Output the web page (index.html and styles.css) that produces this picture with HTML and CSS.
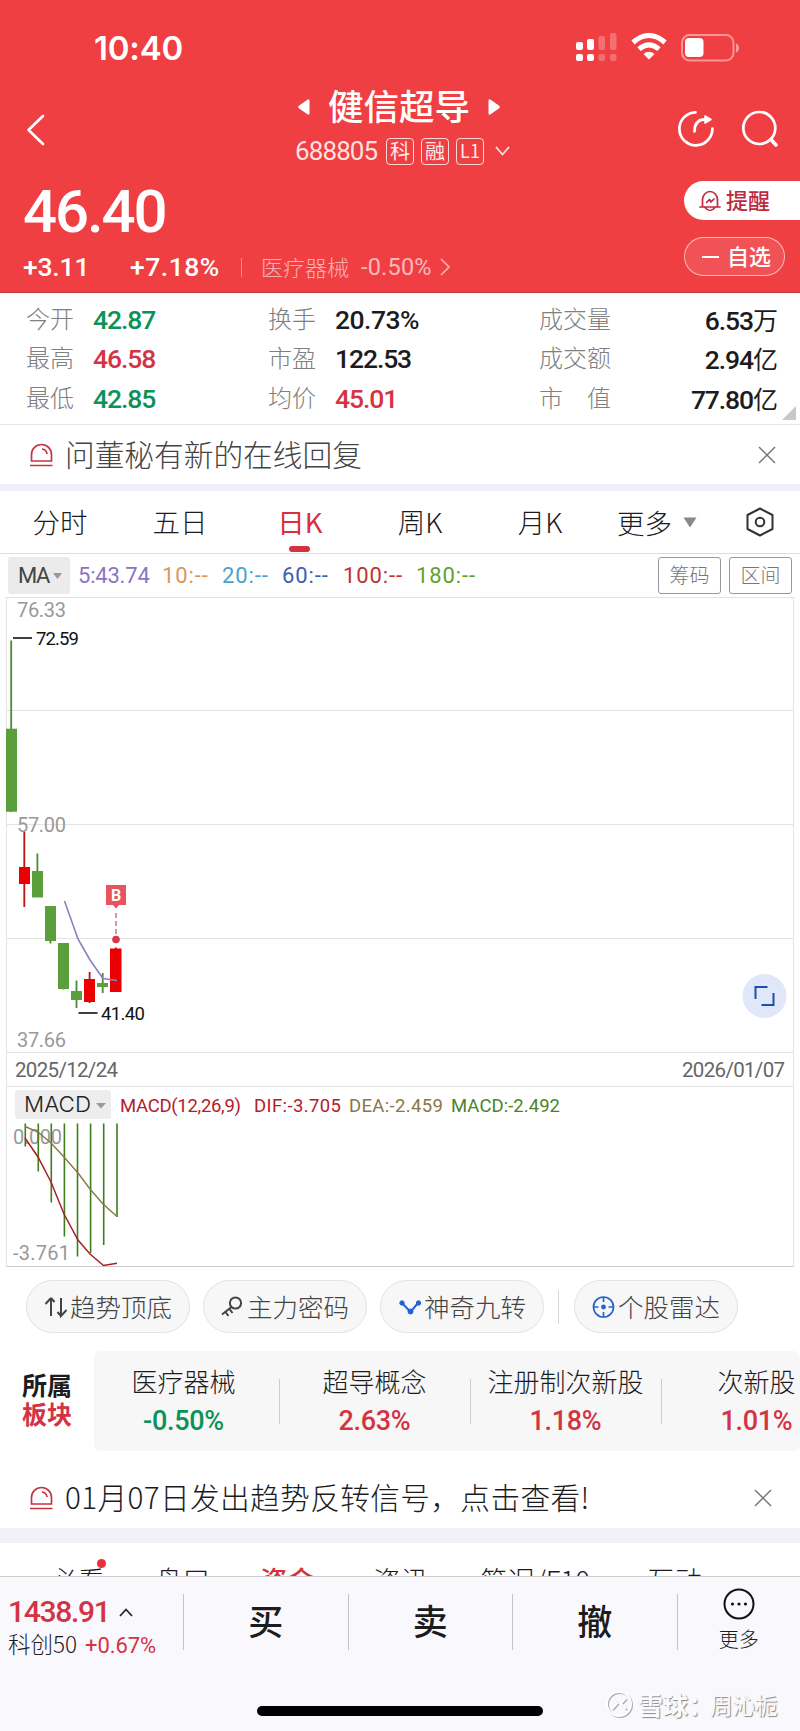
FILE: index.html
```html
<!DOCTYPE html>
<html lang="zh-CN">
<head>
  <meta charset="UTF-8" />
  <meta name="viewport" content="width=device-width, initial-scale=1.0"/>
  <title>健信超导 688805</title>
  <link rel="stylesheet" href="styles.css">
</head>
<body>
<div class="page">

  <header class="header">
    <div class="status-bar">
      <span class="clock">10:40</span>
      <svg class="signal" width="42" height="30" viewBox="0 0 42 30" fill="#fff">
        <rect x="1" y="9" width="7" height="8" rx="2"/><rect x="1" y="21" width="7" height="7" rx="2"/>
        <rect x="12" y="6" width="7" height="11" rx="2"/><rect x="12" y="21" width="7" height="7" rx="2"/>
        <g opacity=".25"><rect x="23.500" y="3" width="6.500" height="14" rx="2"/><rect x="23.500" y="21" width="6.500" height="7" rx="2"/>
        <rect x="35" y="0" width="6.500" height="17" rx="2"/><rect x="35" y="21" width="6.500" height="7" rx="2"/></g>
      </svg>
      <svg class="wifi" width="36" height="27" viewBox="0 0 36 27" fill="none" stroke="#fff" stroke-width="5">
        <path d="M2 9.500Q18-4.500 34 9.500"/><path d="M8 16.200Q18 7.500 28 16.200"/><path d="M12.500 21Q18 16.500 23.500 21L18 26.500Z" fill="#fff" stroke="none"/>
      </svg>
      <svg class="battery" width="59" height="28" viewBox="0 0 59 28">
        <rect x="1" y="1" width="51.500" height="25.500" rx="7.500" fill="none" stroke="#fff" stroke-opacity=".45" stroke-width="2"/>
        <rect x="4" y="4" width="18.500" height="19" rx="4" fill="#fff"/>
        <path d="M55 9.500q3 1 3 4.500t-3 4.500z" fill="#fff" opacity=".5"/>
      </svg>
    </div>

    <div class="nav">
      <svg class="back" width="20" height="32" viewBox="0 0 20 32" fill="none" stroke="#fff" stroke-width="2.600" stroke-linecap="round" stroke-linejoin="round"><path d="M17 2L2.500 16 17 30"/></svg>
      <div class="nav-title">
        <div class="name-row">
          <svg width="12" height="18" viewBox="0 0 12 18" fill="#fff"><path d="M11.500 3v12q0 3-2.500 1L.8 10.200q-1.200-1.200 0-2.400L9 2q2.500-2 2.500 1z"/></svg>
          <h1>健信超导</h1>
          <svg width="12" height="18" viewBox="0 0 12 18" fill="#fff"><path d="M.5 3v12q0 3 2.500 1l8.200-5.800q1.200-1.200 0-2.400L3 2Q.5 0 .5 3z"/></svg>
        </div>
        <div class="code-row">
          <span class="code">688805</span>
          <span class="badge">科</span><span class="badge">融</span><span class="badge l1">L1</span>
          <svg width="15" height="10" viewBox="0 0 15 10" fill="none" stroke="#fff" stroke-opacity=".85" stroke-width="1.800"><path d="M1 1l6.500 7.500L14 1"/></svg>
        </div>
      </div>
      <svg class="share" width="38" height="38" viewBox="0 0 38 38" fill="none" stroke="#fff" stroke-width="2.700" stroke-linecap="round" stroke-linejoin="round">
        <path d="M18.500 2.300A16.500 16.500 0 1 0 35.400 18.500"/><path d="M17.500 21.500C17.500 13.500 21 9.300 28 9.300"/><path d="M28 6l6 3.500-6 3.500z" fill="#fff" stroke-width="1.500"/>
      </svg>
      <svg class="search" width="38" height="38" viewBox="0 0 38 38" fill="none" stroke="#fff" stroke-width="2.700" stroke-linecap="round"><circle cx="18.300" cy="18" r="16"/><path d="M30 29.500l5 5.500" stroke-width="3.600"/></svg>
    </div>

    <div class="quote">
      <div class="quote-left">
        <div class="price">46.40</div>
        <div class="change-row">
          <span class="chg">+3.11</span>
          <span class="pct">+7.18%</span>
          <span class="sep"></span>
          <span class="industry">医疗器械</span>
          <span class="industry-pct">-0.50%</span>
          <svg width="11" height="18" viewBox="0 0 11 18" fill="none" stroke="#fff" stroke-opacity=".6" stroke-width="1.700"><path d="M1 1l8 8-8 8"/></svg>
        </div>
      </div>
      <div class="quote-btns">
        <div class="btn-alert">
          <svg width="22" height="22" viewBox="0 0 22 22" fill="none" stroke="#bd2a40" stroke-width="1.700" stroke-linejoin="round" stroke-linecap="round"><path d="M3.500 17V10a7.500 8.500 0 0 1 15 0v7M1 17h20M6 17.500q5 6 10 0"/><path d="M7.500 12.500l3-3 1.500 2.500 3-3"/></svg>
          <span>提醒</span>
        </div>
        <div class="btn-fav"><i class="minus"></i><span>自选</span></div>
      </div>
    </div>
  </header>

  <section class="stats">
    <div class="stat-col c1">
      <div><label>今开</label><b class="green">42.87</b></div>
      <div><label>最高</label><b class="red">46.58</b></div>
      <div><label>最低</label><b class="green">42.85</b></div>
    </div>
    <div class="stat-col c2">
      <div><label>换手</label><b>20.73%</b></div>
      <div><label>市盈</label><b>122.53</b></div>
      <div><label>均价</label><b class="red">45.01</b></div>
    </div>
    <div class="stat-col c3">
      <div><label>成交量</label><b>6.53<span>万</span></b></div>
      <div><label>成交额</label><b>2.94<span>亿</span></b></div>
      <div><label>市　值</label><b>77.80<span>亿</span></b></div>
    </div>
    <i class="corner"></i>
  </section>

  <div class="notice">
    <svg class="siren" width="23" height="24" viewBox="0 0 23 24" fill="none" stroke="#c8323f" stroke-width="1.700"><path d="M1.500 18V11.500a10 10 0 0 1 20 0V18zM0 22.500h22.500"/><path d="M12 6q4.500.5 5 5"/></svg>
    <span class="notice-text">问董秘有新的在线回复</span>
    <svg class="close" width="18" height="18" viewBox="0 0 18 18" stroke="#777" stroke-width="1.500"><path d="M1 1l16 16M17 1L1 17"/></svg>
  </div>

  <nav class="tabs">
    <span>分时</span><span>五日</span><span class="active">日K</span><span>周K</span><span>月K</span>
    <span class="more">更多<svg width="14" height="11" viewBox="0 0 14 11" fill="#888"><path d="M.5.5h13L7 10.500z"/></svg></span>
    <svg class="gear" width="28" height="30" viewBox="0 0 28 30" fill="none" stroke="#333" stroke-width="2"><path d="M14 1.500l12.500 6.500v14L14 28.500 1.500 22V8z" stroke-linejoin="round"/><circle cx="14" cy="15" r="4.300"/></svg>
  </nav>

  <div class="ma-row">
    <span class="ma-pill">MA<svg width="9" height="6" viewBox="0 0 9 6" fill="#999"><path d="M0 0h9L4.500 6z"/></svg></span>
    <span class="m5">5:43.74</span><span class="m10">10:--</span><span class="m20">20:--</span>
    <span class="m60">60:--</span><span class="m100">100:--</span><span class="m180">180:--</span>
    <span class="box-btn">筹码</span><span class="box-btn">区间</span>
  </div>

  <div class="chart">
    <svg width="800" height="673" viewBox="0 597 800 673">
      <g stroke="#e3e3e3" stroke-width="1" fill="none" shape-rendering="crispEdges">
        <path d="M6 597.500H794M6 710.500H794M6 824.500H794M6 938.500H794M6 1052.500H794M6 1086.500H794"/>
        <path d="M6.500 597V1266M793.500 597V1266"/>
        <path d="M6 1266.500H794" stroke="#ccc"/>
      </g>
      <g class="axis" font-size="20">
        <text x="17" y="617" textLength="49">76.33</text>
        <text x="17" y="832" textLength="49">57.00</text>
        <text x="17" y="1047" textLength="49">37.66</text>
        <text x="13" y="1144" textLength="49">0.000</text>
        <text x="13" y="1260" textLength="57">-3.761</text>
      </g>
      <!-- candles -->
      <g fill="#5a9f3c" stroke="#4b8a30">
        <path d="M11.200 640.500V812M37.400 853.500V890M50.400 910V943.500M63.500 950V989.500M76.500 980.500V1008M102.700 973V993" stroke-width="1.800"/>
        <g stroke="none">
          <rect x="6" y="728.700" width="11" height="83"/><rect x="32" y="871" width="11" height="26.500"/>
          <rect x="45" y="906" width="11" height="35"/><rect x="58" y="943" width="11" height="46"/>
          <rect x="71" y="991" width="11" height="9"/><rect x="97" y="983" width="11" height="4"/>
        </g>
      </g>
      <g fill="#ea0000">
        <path d="M24.300 832V907M89.600 972V1003M115.800 947.500V990" stroke="#b81212" stroke-width="1.800"/>
        <rect x="19" y="867" width="11" height="17"/><rect x="84" y="979" width="11" height="23"/><rect x="110" y="948.500" width="11.500" height="43.500"/>
      </g>
      <path d="M64.500 901L78 939 90 960 103 978.500 117 980.500" fill="none" stroke="#8b7fc4" stroke-width="1.600"/>
      <!-- buy marker -->
      <path d="M106 885h20v20h-7l-3 3.500-3-3.500h-7z" fill="#e85361"/>
      <text class="buy" x="116" y="901" text-anchor="middle" font-size="16">B</text>
      <path d="M116 913v22" stroke="#b0566a" stroke-width="1.200" stroke-dasharray="5 3"/>
      <circle cx="116" cy="939.500" r="3.800" fill="#dc3545"/>
      <path d="M13 638h19M78.500 1013h19" stroke="#000" stroke-width="1.600"/>
      <g class="extreme" font-size="18.500">
        <text x="36" y="645" textLength="43">72.59</text>
        <text x="101" y="1020" textLength="44">41.40</text>
      </g>
      <g class="dates" font-size="20.500">
        <text x="15" y="1077" textLength="103">2025/12/24</text>
        <text x="682" y="1077" textLength="103">2026/01/07</text>
      </g>
      <!-- macd -->
      <rect x="15" y="1090" width="96" height="29" rx="3" fill="#ededed"/>
      <text class="macd-name" x="24" y="1112" font-size="22" textLength="67" lengthAdjust="spacingAndGlyphs">MACD</text>
      <path d="M96 1103h10l-5 5.500z" fill="#999"/>
      <g class="macd" font-size="18.500">
        <text x="120" y="1112" textLength="121" fill="#b3202c">MACD(12,26,9)</text>
        <text x="254" y="1112" textLength="87" fill="#b3202c">DIF:-3.705</text>
        <text x="349" y="1112" textLength="94" fill="#8a7646">DEA:-2.459</text>
        <text x="451" y="1112" textLength="109" fill="#4a8426">MACD:-2.492</text>
      </g>
      <path d="M25.300 1123.500V1146.500M38.300 1123.500V1171.500M51.300 1123.500V1202.500M64.400 1123.500V1236.500M77.500 1123.500V1256.500M90.600 1123.500V1253M103.700 1123.500V1245M117 1123.500V1217" stroke="#3f7d1d" stroke-width="1.600"/>
      <path d="M25 1138L38 1157 51 1182 64 1214 78 1240 90 1254 103.500 1265.500 117 1263.300" fill="none" stroke="#a81f28" stroke-width="1.500"/>
      <path d="M25 1126.500L38 1132 51 1143 64 1157 78 1173 90 1189 103 1204 117 1216.500" fill="none" stroke="#8a7646" stroke-width="1.400"/>
      <!-- fullscreen button -->
      <circle cx="764.500" cy="996" r="22" fill="#dfe7f8"/>
      <path d="M755.500 999v-12h12M773.500 993v12h-12" fill="none" stroke="#1d4fae" stroke-width="2"/>
    </svg>
  </div>

  <div class="tools">
    <div class="tool"><svg width="24" height="22" viewBox="0 0 24 22" fill="none" stroke="#444" stroke-width="2"><path d="M7 20V2M1.500 8L7 2M17 2v18L22.500 14"/><path d="M7 2l3.500 4M17 20l-3.500-4"/></svg><span>趋势顶底</span></div>
    <div class="tool"><svg width="24" height="22" viewBox="0 0 24 22" fill="none" stroke="#444" stroke-width="2"><circle cx="14.500" cy="7" r="5.600"/><path d="M10.500 11L1 18.500M4.500 16l3 4M8.500 13l3 4"/></svg><span>主力密码</span></div>
    <div class="tool"><svg width="24" height="22" viewBox="0 0 24 22" fill="#2463d1" stroke="#2463d1"><path d="M4 7l8.500 9L20 7" fill="none" stroke-width="2"/><circle cx="4" cy="7" r="2.200"/><circle cx="12.500" cy="15.500" r="2.500"/><circle cx="20.500" cy="7" r="2.200"/></svg><span>神奇九转</span></div>
    <i class="tool-sep"></i>
    <div class="tool"><svg width="24" height="22" viewBox="0 0 24 22" fill="none" stroke="#2463d1" stroke-width="1.700"><circle cx="11.500" cy="11" r="10"/><path d="M11.500 1v5M11.500 16v5M1.500 11h5M16.500 11h5"/><circle cx="11.500" cy="11" r="1.600" fill="#2463d1"/></svg><span>个股雷达</span></div>
  </div>

  <div class="sectors">
    <div class="sector-title"><span>所属</span><span class="red">板块</span></div>
    <div class="sector-list">
      <div class="sector"><span>医疗器械</span><b class="green">-0.50%</b></div>
      <div class="sector"><span>超导概念</span><b class="red">2.63%</b></div>
      <div class="sector"><span>注册制次新股</span><b class="red">1.18%</b></div>
      <div class="sector"><span>次新股</span><b class="red">1.01%</b></div>
    </div>
  </div>

  <div class="notice signal-notice">
    <svg class="siren" width="23" height="24" viewBox="0 0 23 24" fill="none" stroke="#c8323f" stroke-width="1.700"><path d="M1.500 18V11.500a10 10 0 0 1 20 0V18zM0 22.500h22.500"/><path d="M12 6q4.500.5 5 5"/></svg>
    <span class="notice-text">01月07日发出趋势反转信号，点击查看!</span>
    <svg class="close" width="18" height="18" viewBox="0 0 18 18" stroke="#777" stroke-width="1.500"><path d="M1 1l16 16M17 1L1 17"/></svg>
  </div>

  <div class="subtabs">
    <span class="dot">必看</span><span>盘口</span><span class="active">资金</span><span>资讯</span><span>简况/F10</span><span>互动</span>
  </div>

  <footer class="bottom">
    <div class="trade">
      <div class="index">
        <div class="index-value">1438.91<svg width="14" height="9" viewBox="0 0 14 9" fill="none" stroke="#222" stroke-width="1.700"><path d="M1 8l6-6.500L13 8"/></svg></div>
        <div class="index-name">科创50<span>+0.67%</span></div>
      </div>
      <div class="act">买</div>
      <div class="act">卖</div>
      <div class="act">撤</div>
      <div class="act-more">
        <svg width="32" height="32" viewBox="0 0 32 32" fill="#111"><circle cx="16" cy="16" r="14.500" fill="none" stroke="#111" stroke-width="2"/><circle cx="9.500" cy="16" r="1.600"/><circle cx="16" cy="16" r="1.600"/><circle cx="22.500" cy="16" r="1.600"/></svg>
        <span>更多</span>
      </div>
    </div>
    <div class="home-row">
      <i class="home-bar"></i>
      <div class="watermark">
        <svg width="29" height="29" viewBox="0 0 29 29" fill="none"><g stroke="#aaa" stroke-width="2"><circle cx="15" cy="15" r="12"/><path d="M8 9l5 5.500L8 20M22 9l-5 5.500 5 5.500"/></g><g stroke="#fff" stroke-width="2"><circle cx="14" cy="14" r="12"/><path d="M7 8l5 5.500L7 19M21 8l-5 5.500 5 5.500"/></g></svg>
        <strong>雪球：</strong><span>周沁栀</span>
      </div>
    </div>
  </footer>
</div>
</body>
</html>
```
FILE: styles.css
```css
* {
  box-sizing: border-box;
}

body {
  margin: 0;
  background: #fff;
  color: #1c1c1e;
  font-family: "Noto Sans CJK SC", sans-serif;
  font-weight: 300;
}

.page {
  width: 800px;
  height: 1731px;
  overflow: hidden;
  white-space: nowrap;
}

svg {
  display: block;
  flex-shrink: 0;
}

.red {
  color: #d33444;
}

.green {
  color: #0a9257;
}

/* Header */
.header {
  height: 293px;
  background: #f03f42;
  color: #fff;
  border-bottom: 1px solid #bf3a3a;
}

.status-bar {
  display: flex;
  height: 85px;
  padding: 32px 0 0 94px;
}

.clock {
  width: 481px;
  font: 600 33px/33px Inter, sans-serif;
  letter-spacing: -0.200px;
}

.signal {
  margin-top: 1px;
}

.wifi {
  margin: 1px 0 0 14px;
}

.battery {
  margin: 2px 0 0 14px;
}

.nav {
  display: flex;
  height: 84px;
}

.back {
  margin: 29px 0 0 26px;
}

.nav-title {
  width: 220px;
  margin-left: 249px;
}

.name-row {
  display: flex;
  align-items: center;
  height: 44px;
  padding-left: 3px;
}

.name-row h1 {
  margin: -4px 18px 0;
  font-size: 35.500px;
  line-height: 44px;
  font-weight: 500;
}

.code-row {
  display: flex;
  align-items: center;
  height: 44px;
}

.code {
  width: 91px;
  color: rgba(255, 255, 255, .85);
  font: 400 26px/30px Roboto, sans-serif;
  letter-spacing: -0.900px;
}

.badge {
  width: 28px;
  height: 27px;
  margin-right: 7px;
  border: 1px solid rgba(255, 255, 255, .8);
  border-radius: 4px;
  font-size: 20px;
  font-weight: 400;
  line-height: 23px;
  text-align: center;
  color: #ffe9e9;
}

.badge.l1 {
  margin-right: 11px;
  font-size: 18px;
}

.share {
  margin: 25px 0 0 162px;
}

.search {
  margin: 25px 0 0 26px;
}

.quote {
  display: flex;
  justify-content: space-between;
}

.quote-left {
  padding: 10px 0 0 23px;
}

.price {
  font: 500 60px/66px Roboto, sans-serif;
  letter-spacing: -2.100px;
}

.change-row {
  display: flex;
  align-items: center;
  height: 44px;
  font: 500 26.500px/44px Roboto, sans-serif;
}

.chg {
  width: 107px;
  letter-spacing: -0.200px;
}

.pct {
  width: 111px;
  letter-spacing: 0.500px;
}

.sep {
  width: 1px;
  height: 19px;
  margin-right: 19px;
  background: rgba(255, 255, 255, .4);
}

.industry {
  width: 100px;
  margin-top: -3px;
  color: rgba(255, 255, 255, .6);
  font: 300 22px/44px "Noto Sans CJK SC", sans-serif;
}

.industry-pct {
  width: 79px;
  color: rgba(255, 255, 255, .65);
  font-size: 23.500px;
  font-weight: 400;
  letter-spacing: 0.200px;
}

.quote-btns {
  width: 116px;
  padding-top: 12px;
  font-size: 22px;
  font-weight: 500;
  line-height: 38px;
}

.btn-alert,
.btn-fav {
  display: flex;
  align-items: center;
  height: 39px;
  padding-left: 15px;
  background: #fff;
  color: #bd2a40;
  border-radius: 20px 0 0 20px;
}

.quote-btns span {
  margin-top: -3px;
}

.btn-alert span {
  margin-left: 5px;
}

.btn-fav {
  width: 101px;
  margin-top: 17px;
  padding-left: 17px;
  border: 1px solid rgba(255, 255, 255, .6);
  border-radius: 20px;
  background: rgba(255, 255, 255, .1);
  color: #fff;
}

.minus {
  width: 17px;
  height: 2px;
  margin-right: 8px;
  background: #fff;
}

/* Key figures */
.stats {
  position: relative;
  display: flex;
  height: 132px;
  padding: 7px 22px 0 26px;
  border-bottom: 1px solid #e6e6e6;
}

.stat-col > div {
  display: flex;
  height: 39.300px;
  line-height: 39px;
}

.stat-col label {
  color: #808080;
  font-size: 24px;
  line-height: 35px;
}

.stat-col b {
  font: 500 26.500px/40px Roboto, sans-serif;
  letter-spacing: -1.100px;
}

.stat-col b span {
  font: 400 25px/38px "Noto Sans CJK SC", sans-serif;
  letter-spacing: 0;
}

.c1 {
  width: 242px;
}

.c1 label {
  width: 67px;
}

.c2 {
  width: 271px;
}

.c2 label {
  width: 67px;
}

.c2 > div:first-child b {
  letter-spacing: -0.500px;
}

.c3 {
  flex: 1;
}

.c3 > div {
  justify-content: space-between;
}

.corner {
  position: absolute;
  right: 4px;
  bottom: 4px;
  border-left: 14px solid transparent;
  border-bottom: 14px solid #c8c8c8;
}

/* Notices */
.notice {
  display: flex;
  align-items: center;
  height: 66px;
  padding: 0 24px 0 30px;
  border-bottom: 7px solid #f0f0fa;
}

.notice-text {
  flex: 1;
  margin: -2px 0 0 12px;
  color: #444;
  font-size: 29.700px;
  line-height: 44px;
}

.signal-notice {
  height: 92px;
  padding: 17px 28px 0 30px;
  border-bottom: 15px solid #f1f1f6;
}

.signal-notice .notice-text {
  color: #1c1c1e;
  letter-spacing: 0.350px;
}

/* Period tabs */
.tabs {
  display: flex;
  align-items: center;
  height: 63px;
  border-bottom: 1px solid #ddd;
  font-size: 27.500px;
  line-height: 60px;
}

.tabs > span {
  width: 120px;
  height: 62px;
  text-align: center;
}

.tabs .active {
  position: relative;
  color: #d7303f;
  font-weight: 400;
}

.tabs .active::after {
  content: "";
  position: absolute;
  left: 49px;
  bottom: 1px;
  width: 21px;
  height: 6px;
  border-radius: 3px;
  background: #d9303e;
}

.tabs .more {
  display: flex;
  align-items: center;
  width: 129px;
  margin-left: 17px;
}

.more svg {
  margin-left: 11px;
}

/* MA row */
.ma-row {
  display: flex;
  align-items: center;
  height: 43px;
  padding-left: 8px;
  font: 400 22px/38px Roboto, sans-serif;
  letter-spacing: 0.400px;
}

.ma-row span {
  flex-shrink: 0;
}

.ma-pill {
  display: flex;
  align-items: center;
  width: 62px;
  height: 37px;
  margin-right: 8px;
  padding-left: 10px;
  border-radius: 3px;
  background: #ebebeb;
  color: #444;
  letter-spacing: -1.500px;
}

.ma-pill svg {
  margin-left: 4px;
}

.m5 {
  width: 84px;
  color: #8c74c2;
  letter-spacing: -0.200px;
}

.m10 {
  width: 60px;
  color: #dd965a;
}

.m20 {
  width: 60px;
  color: #46a3cf;
}

.m60 {
  width: 61px;
  color: #3a62ad;
}

.m100 {
  width: 73px;
  color: #bb3530;
}

.m180 {
  width: 242px;
  color: #63a02c;
}

.m10,
.m20,
.m60,
.m100,
.m180 {
  letter-spacing: 0.900px;
}

.box-btn {
  width: 63px;
  height: 37px;
  margin-right: 8px;
  border: 1px solid #999;
  border-radius: 3px;
  color: #777;
  font: 300 20px/34px "Noto Sans CJK SC", sans-serif;
  letter-spacing: 0;
  text-align: center;
}

/* Chart */
.chart {
  height: 673px;
}

.chart text {
  font-family: Roboto, sans-serif;
  font-weight: 400;
}

.chart .axis {
  fill: #999;
}

.extreme {
  fill: #111;
}

.dates {
  fill: #666;
}

.chart .buy {
  fill: #fff;
  font-weight: 700;
}

.chart .macd-name {
  fill: #222;
  font-family: Inter, sans-serif;
  font-weight: 300;
}

/* Tools */
.tools {
  display: flex;
  align-items: center;
  height: 81px;
  padding: 0 0 8px 26px;
}

.tool {
  display: flex;
  align-items: center;
  justify-content: center;
  width: 164px;
  height: 53px;
  margin-right: 13px;
  border: 1px solid #e2e2e2;
  border-radius: 27px;
  background: #f7f7f7;
  color: #444;
  font-size: 25.500px;
  line-height: 50px;
}

.tool svg {
  margin-right: 2px;
}

.tool span {
  margin-top: -2px;
}

.tool-sep {
  width: 1px;
  height: 34px;
  margin: 0 15px 0 1px;
  background: #d8d8d8;
}

/* Sectors */
.sectors {
  display: flex;
  height: 100px;
}

.sector-title {
  width: 94px;
  padding: 19px 0 0 22px;
  font-size: 25px;
  font-weight: 700;
  line-height: 29px;
}

.sector-title span {
  display: block;
}

.sector-list {
  display: flex;
  align-items: center;
  width: 706px;
  border-radius: 6px;
  background: #f7f7f7;
  overflow: hidden;
}

.sector {
  flex-shrink: 0;
  width: 191px;
  font-size: 26px;
  text-align: center;
}

.sector:first-child {
  width: 185px;
}

.sector:first-child span,
.sector:first-child b {
  margin-left: -6px;
}

.sector + .sector {
  background: linear-gradient(#ccc, #ccc) 0 50% / 1px 45px no-repeat;
}

.sector span,
.sector b {
  display: block;
  line-height: 34px;
}

.sector b {
  margin-top: 6px;
  font: 500 27px/34px Roboto, sans-serif;
  letter-spacing: -0.300px;
}

/* Clipped content tabs */
.subtabs {
  display: flex;
  height: 33px;
  padding: 16px 0 0 50px;
  overflow: hidden;
  font-size: 27.500px;
  line-height: 40px;
}

.subtabs span {
  flex-shrink: 0;
  width: 105px;
}

.subtabs .active {
  width: 113px;
  color: #d7303f;
  font-weight: 500;
}

.subtabs span:nth-child(4) {
  width: 107px;
}

.subtabs span:nth-child(5) {
  width: 167px;
}

.subtabs .dot {
  position: relative;
}

.dot::after {
  content: "";
  position: absolute;
  left: 47px;
  top: 0;
  width: 9px;
  height: 9px;
  border-radius: 50%;
  background: #ea2f3c;
}

/* Bottom bar */
.bottom {
  height: 155px;
  border-top: 1px solid #ccc;
  background: #f8f8fd;
}

.trade {
  display: flex;
  height: 92px;
  padding-top: 17px;
}

.index {
  width: 183px;
  padding-left: 8px;
}

.index-value {
  display: flex;
  align-items: center;
  height: 36px;
  color: #d33444;
  font: 500 30px/36px Roboto, sans-serif;
  letter-spacing: -1.300px;
}

.index-value svg {
  margin-left: 9px;
}

.index-name {
  margin-top: -2px;
  font-size: 22.500px;
  line-height: 30px;
}

.index-name span {
  margin-left: 8px;
  color: #d33444;
  font: 400 22px/30px Roboto, sans-serif;
  letter-spacing: -0.100px;
}

.act,
.act-more {
  width: 164.500px;
  height: 56px;
  border-left: 1px solid #c4c4c8;
  font-size: 35px;
  font-weight: 500;
  line-height: 51px;
  text-align: center;
}

.act-more {
  flex: 1;
  display: flex;
  flex-direction: column;
  align-items: center;
  font-size: 20px;
  font-weight: 300;
  line-height: 30px;
}

.act-more svg {
  margin-top: -6px;
}

.act-more span {
  margin-top: 4px;
}

.home-row {
  display: flex;
  padding-left: 257px;
}

.home-bar {
  width: 286px;
  height: 10px;
  margin-top: 37px;
  border-radius: 5px;
  background: #000;
}

.watermark {
  display: flex;
  align-items: center;
  height: 30px;
  margin: 20px 0 0 62px;
  color: #fbfbfd;
  font-size: 22.500px;
  font-weight: 400;
  text-shadow: 1px 1px 1px #888;
}

.watermark strong {
  width: 72px;
  margin-left: 4px;
  font-size: 25px;
  font-weight: 700;
}
```
